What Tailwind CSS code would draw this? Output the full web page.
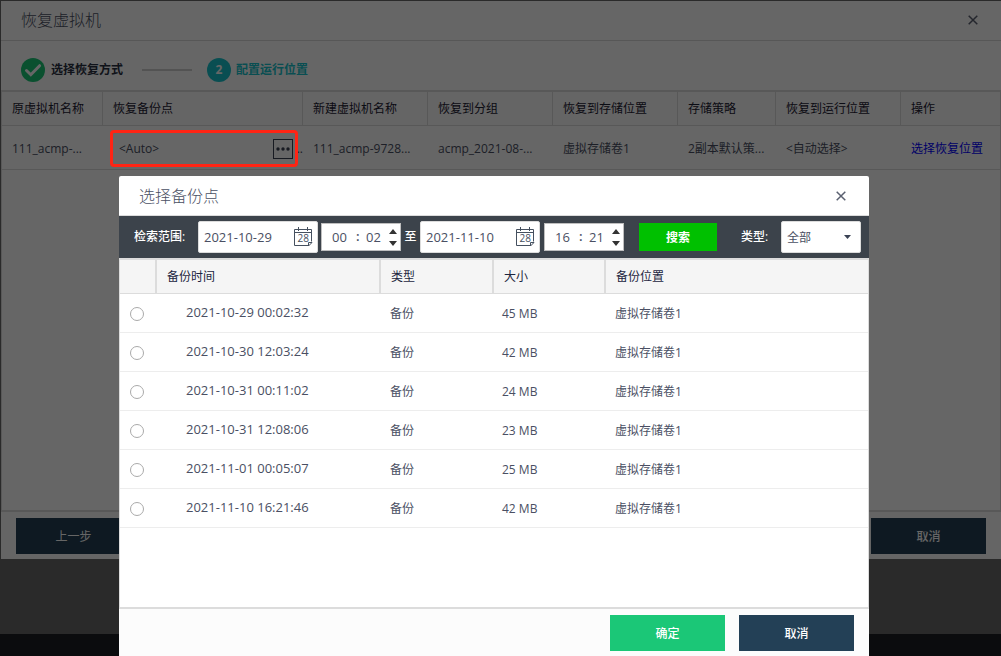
<!DOCTYPE html>
<html lang="zh-CN">
<head>
<meta charset="utf-8">
<title>恢复虚拟机</title>
<script src="https://cdn.jsdelivr.net/npm/@tailwindcss/browser@4"></script>
</head>
<body class="relative flex min-h-screen flex-col overflow-hidden bg-[#696969] font-['Open_Sans','Noto_Sans_CJK_SC',sans-serif] text-xs text-[#4a4f63]">

<!-- Restore dialog -->
<section class="mt-px ml-px flex h-[558px] flex-col bg-white" aria-labelledby="restore-title">
  <header class="flex h-10 shrink-0 items-center justify-between border-b border-[#d9d9d9] px-5 pb-0.5">
    <h1 id="restore-title" class="text-base font-light">恢复虚拟机</h1>
    <button type="button" aria-label="关闭" class="flex size-4 items-center justify-center">
      <svg class="size-[10px]" viewBox="0 0 10 10" fill="none" stroke="#5a6070" stroke-width="1.5"><path d="M.7.7l8.6 8.6M9.3.7L.7 9.3"/></svg>
    </button>
  </header>
  <ol class="flex h-[49px] shrink-0 items-center px-5 pt-[9px] font-bold">
    <li class="flex items-center gap-1.5 text-[#2a3042]">
      <svg class="size-6" viewBox="0 0 24 24"><circle cx="12" cy="12" r="12" fill="#1bc777"/><path d="M5.5 12.5l4.3 4.2 8.8-9" fill="none" stroke="#fff" stroke-width="3" stroke-linecap="round"/></svg>
      <span>选择恢复方式</span>
    </li>
    <li aria-hidden="true" class="mr-[15px] ml-[19px] h-0.5 w-[50px] bg-[#cfcfcf]"></li>
    <li class="flex items-center gap-[5px] text-[#18c4cc]">
      <span class="flex size-6 items-center justify-center rounded-full bg-[#18c4cc] font-bold text-white">2</span>
      <span>配置运行位置</span>
    </li>
  </ol>
  <div class="grow border-x border-y-2 border-[#dcdcdc]">
    <table class="w-full table-fixed border-separate border-spacing-0 text-left">
      <colgroup>
        <col class="w-[101px]"><col class="w-[200px]"><col class="w-[125px]"><col class="w-[125px]"><col class="w-[125px]"><col class="w-[98px]"><col class="w-[125px]"><col>
      </colgroup>
      <thead class="bg-[#fcfcfc] text-[#1c2033] [&_th]:h-[34px] [&_th]:border-b [&_th]:border-[#dcdcdc] [&_th]:pl-2.5 [&_th]:font-normal">
        <tr>
          <th class="border-r">原虚拟机名称</th>
          <th class="border-r">恢复备份点</th>
          <th class="border-r">新建虚拟机名称</th>
          <th class="border-r">恢复到分组</th>
          <th class="border-r">恢复到存储位置</th>
          <th class="border-r">存储策略</th>
          <th class="border-r">恢复到运行位置</th>
          <th>操作</th>
        </tr>
      </thead>
      <tbody class="whitespace-nowrap [&_td]:h-11 [&_td]:border-b [&_td]:border-[#dcdcdc] [&_td]:pt-0.5">
        <tr>
          <td class="pl-2.5">111_acmp-...</td>
          <td class="pl-4">
            <div class="flex items-center justify-between">
              <span>&lt;Auto&gt;</span>
              <span class="flex items-center gap-1">
                <button type="button" aria-label="选择备份点" class="flex size-5 items-center justify-center border border-[#3a4254]">
                  <svg class="h-1 w-[14px]" viewBox="0 0 14 4" fill="#3a4254"><circle cx="2" cy="2" r="1.7"/><circle cx="7" cy="2" r="1.7"/><circle cx="12" cy="2" r="1.7"/></svg>
                </button>
                <span>..</span>
              </span>
            </div>
          </td>
          <td class="pl-2.5">111_acmp-9728...</td>
          <td class="pl-2.5">acmp_2021-08-...</td>
          <td class="pl-2.5">虚拟存储卷1</td>
          <td class="pl-2.5">2副本默认策...</td>
          <td class="pl-2.5">&lt;自动选择&gt;</td>
          <td class="pl-2.5"><a href="#" class="text-[#0000ff]">选择恢复位置</a></td>
        </tr>
      </tbody>
    </table>
  </div>
  <footer class="flex h-[47px] shrink-0 justify-between bg-[#fcfcfc] px-[15px] pt-1.5 text-white">
    <button type="button" class="h-9 w-[115px] bg-[#234056] pt-0.5">上一步</button>
    <button type="button" class="h-9 w-[115px] bg-[#234056] pt-0.5 font-medium">取消</button>
  </footer>
</section>
<div class="grow"></div>
<div class="h-[22px] bg-[#1c2023]"></div>

<!-- Dimming layer and highlight of the backup point field -->
<div class="absolute inset-0 bg-black/60"></div>
<div class="absolute top-[130px] left-[110px] h-[37px] w-[188px] rounded-sm border-3 border-[#ff2414]"></div>

<!-- Backup point picker -->
<section role="dialog" aria-labelledby="picker-title" class="absolute top-[176px] left-[119px] flex h-[480px] w-[750px] flex-col rounded-t-xs bg-white">
  <header class="flex h-10 shrink-0 items-center justify-between border-b border-[#dcdcdc] px-5">
    <h2 id="picker-title" class="text-base font-light">选择备份点</h2>
    <button type="button" aria-label="关闭" class="flex size-4 items-center justify-center">
      <svg class="size-[10px]" viewBox="0 0 10 10" fill="none" stroke="#5a6070" stroke-width="1.5"><path d="M.7.7l8.6 8.6M9.3.7L.7 9.3"/></svg>
    </button>
  </header>

  <form class="flex h-[42px] shrink-0 items-center bg-[#3c434b] pr-2 pl-[15px]">
    <label for="from-date" class="w-16 font-medium text-white">检索范围:</label>
    <div class="flex h-8 w-[120px] items-center justify-between rounded-xs border border-[#dcdcdc] bg-white pr-1 pl-[5px]">
      <input id="from-date" type="text" value="2021-10-29" class="w-20 pt-0.5 text-[13px] outline-none">
      <svg class="size-5" viewBox="0 0 20 20" fill="none" stroke="#45505f"><path d="M18.5 14.5v-12h-17v16h13.5M1.5 5.5h17M5.5 0v4M14.5 0v4M15.5 19v-3.5h3.5l-3.5 3.5"/><text x="4.5" y="15" font-size="10" fill="#45505f" stroke="none">28</text></svg>
    </div>
    <div class="ml-[3px] flex h-7 w-20 items-center border border-[#bfbfbf] bg-white pl-2.5 text-[13px]">
      <input type="text" value="00" aria-label="开始小时" class="w-6 pt-0.5 outline-none">
      <span class="w-2.5 font-semibold">:</span>
      <input type="text" value="02" aria-label="开始分钟" class="w-[23px] pt-0.5 outline-none">
      <svg class="h-[17px] w-2" viewBox="0 0 8 17" fill="#333"><path d="M0 5L4 0l4 5zM0 12h8l-4 5z"/></svg>
    </div>
    <span class="w-[19px] text-center font-medium text-white">至</span>
    <div class="flex h-8 w-[120px] items-center justify-between rounded-xs border border-[#dcdcdc] bg-white pr-1 pl-[5px]">
      <input type="text" value="2021-11-10" aria-label="结束日期" class="w-20 pt-0.5 text-[13px] outline-none">
      <svg class="size-5" viewBox="0 0 20 20" fill="none" stroke="#45505f"><path d="M18.5 14.5v-12h-17v16h13.5M1.5 5.5h17M5.5 0v4M14.5 0v4M15.5 19v-3.5h3.5l-3.5 3.5"/><text x="4.5" y="15" font-size="10" fill="#45505f" stroke="none">28</text></svg>
    </div>
    <div class="ml-1 flex h-7 w-20 items-center border border-[#bfbfbf] bg-white pl-2.5 text-[13px]">
      <input type="text" value="16" aria-label="结束小时" class="w-6 pt-0.5 outline-none">
      <span class="w-2.5 font-semibold">:</span>
      <input type="text" value="21" aria-label="结束分钟" class="w-[23px] pt-0.5 outline-none">
      <svg class="h-[17px] w-2" viewBox="0 0 8 17" fill="#333"><path d="M0 5L4 0l4 5zM0 12h8l-4 5z"/></svg>
    </div>
    <button type="button" class="ml-[15px] h-7 w-[78px] bg-[#00c000] pt-0.5 font-bold text-white">搜索</button>
    <label for="kind" class="ml-auto w-10 font-medium text-white">类型:</label>
    <div class="relative">
      <select id="kind" class="block h-8 w-20 appearance-none rounded-xs border border-[#dcdcdc] bg-white pt-0.5 pl-[5px]"><option>全部</option></select>
      <svg class="pointer-events-none absolute top-[14px] right-[10px] h-1 w-[7px]" viewBox="0 0 7 4" fill="#3a4254"><path d="M0 0h7L3.5 4z"/></svg>
    </div>
  </form>

  <div class="grow border-x border-y-2 border-[#dcdcdc]">
    <table class="w-full table-fixed border-separate border-spacing-0 text-left">
      <colgroup><col class="w-[37px]"><col class="w-[224px]"><col class="w-[113px]"><col class="w-[112px]"><col></colgroup>
      <thead class="bg-[#f5f5f5] text-[#1c2540]">
        <tr>
          <td class="h-[34px] border-r-2 border-b border-[#dcdcdc]"></td>
          <th class="border-r-2 border-b border-[#dcdcdc] pl-2.5 font-normal">备份时间</th>
          <th class="border-r-2 border-b border-[#dcdcdc] pl-2.5 font-normal">类型</th>
          <th class="border-r-2 border-b border-[#dcdcdc] pl-2.5 font-normal">大小</th>
          <th class="border-b border-[#dcdcdc] pl-2.5 font-normal">备份位置</th>
        </tr>
      </thead>
      <tbody class="[&_td]:h-[39px] [&_td]:border-b [&_td]:border-[#ededed]">
        <tr><td class="pt-0.5 pl-2.5"><input type="radio" name="point" aria-label="2021-10-29 00:02:32" class="block size-[14px] appearance-none rounded-full border border-[#aaa]"></td><td class="pl-[29px] text-[13px]">2021-10-29 00:02:32</td><td class="pt-0.5 pl-[9px]">备份</td><td class="pt-0.5 pl-2">45 MB</td><td class="pt-0.5 pl-[9px]">虚拟存储卷1</td></tr>
        <tr><td class="pt-0.5 pl-2.5"><input type="radio" name="point" aria-label="2021-10-30 12:03:24" class="block size-[14px] appearance-none rounded-full border border-[#aaa]"></td><td class="pl-[29px] text-[13px]">2021-10-30 12:03:24</td><td class="pt-0.5 pl-[9px]">备份</td><td class="pt-0.5 pl-2">42 MB</td><td class="pt-0.5 pl-[9px]">虚拟存储卷1</td></tr>
        <tr><td class="pt-0.5 pl-2.5"><input type="radio" name="point" aria-label="2021-10-31 00:11:02" class="block size-[14px] appearance-none rounded-full border border-[#aaa]"></td><td class="pl-[29px] text-[13px]">2021-10-31 00:11:02</td><td class="pt-0.5 pl-[9px]">备份</td><td class="pt-0.5 pl-2">24 MB</td><td class="pt-0.5 pl-[9px]">虚拟存储卷1</td></tr>
        <tr><td class="pt-0.5 pl-2.5"><input type="radio" name="point" aria-label="2021-10-31 12:08:06" class="block size-[14px] appearance-none rounded-full border border-[#aaa]"></td><td class="pl-[29px] text-[13px]">2021-10-31 12:08:06</td><td class="pt-0.5 pl-[9px]">备份</td><td class="pt-0.5 pl-2">23 MB</td><td class="pt-0.5 pl-[9px]">虚拟存储卷1</td></tr>
        <tr><td class="pt-0.5 pl-2.5"><input type="radio" name="point" aria-label="2021-11-01 00:05:07" class="block size-[14px] appearance-none rounded-full border border-[#aaa]"></td><td class="pl-[29px] text-[13px]">2021-11-01 00:05:07</td><td class="pt-0.5 pl-[9px]">备份</td><td class="pt-0.5 pl-2">25 MB</td><td class="pt-0.5 pl-[9px]">虚拟存储卷1</td></tr>
        <tr><td class="pt-0.5 pl-2.5"><input type="radio" name="point" aria-label="2021-11-10 16:21:46" class="block size-[14px] appearance-none rounded-full border border-[#aaa]"></td><td class="pl-[29px] text-[13px]">2021-11-10 16:21:46</td><td class="pt-0.5 pl-[9px]">备份</td><td class="pt-0.5 pl-2">42 MB</td><td class="pt-0.5 pl-[9px]">虚拟存储卷1</td></tr>
      </tbody>
    </table>
  </div>

  <footer class="flex h-[47px] shrink-0 justify-end gap-[14px] bg-[#fcfcfc] px-[15px] pt-1.5 font-medium text-white">
    <button type="button" class="h-9 w-[115px] bg-[#1bc777] pt-0.5">确定</button>
    <button type="button" class="h-9 w-[115px] bg-[#234056] pt-0.5">取消</button>
  </footer>
</section>
</body>
</html>
